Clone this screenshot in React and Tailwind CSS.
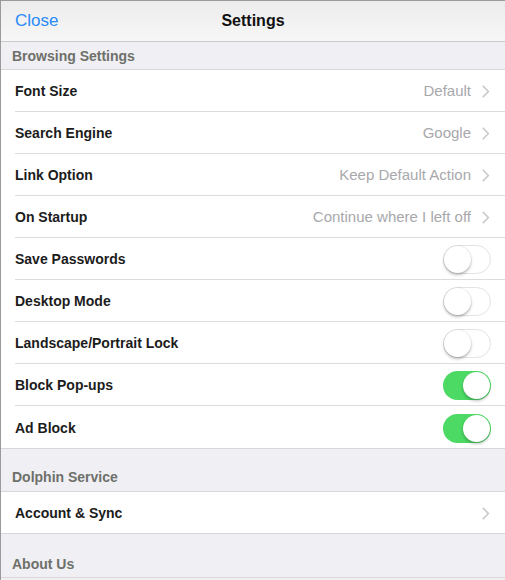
import React from 'react'

const browsing = [
  { label: 'Font Size', value: 'Default' },
  { label: 'Search Engine', value: 'Google' },
  { label: 'Link Option', value: 'Keep Default Action' },
  { label: 'On Startup', value: 'Continue where I left off' },
  { label: 'Save Passwords', toggle: false },
  { label: 'Desktop Mode', toggle: false },
  { label: 'Landscape/Portrait Lock', toggle: false },
  { label: 'Block Pop-ups', toggle: true },
  { label: 'Ad Block', toggle: true, last: true },
]

const Chevron = () => (
  <svg width="8" height="13" viewBox="0 0 8 13" className="ml-[11px]">
    <path d="M1.2 1.2 L6.4 6.5 L1.2 11.8" fill="none" stroke="#c7c7cc" strokeWidth="1.6" strokeLinecap="round" strokeLinejoin="round" />
  </svg>
)

const Toggle = ({ on }) => (
  <div
    className={
      on
        ? 'relative w-[48px] h-[29px] rounded-full bg-[#4cd964] mr-[14px]'
        : 'relative w-[48px] h-[29px] rounded-full bg-white border border-[#e3e3e6] mr-[14px]'
    }
  >
    <div
      className={
        on
          ? 'absolute top-[1px] right-[1px] w-[27px] h-[27px] rounded-full bg-white shadow-[0_2px_3px_rgba(0,0,0,0.25)]'
          : 'absolute top-0 left-0 w-[27px] h-[27px] rounded-full bg-white shadow-[0_2px_3px_rgba(0,0,0,0.25),0_0_0_1px_rgba(0,0,0,0.05)]'
      }
    />
  </div>
)

const Row = ({ item }) => (
  <div className="pl-[14px] bg-white">
    <div
      className={
        item.last
          ? 'h-[42px] flex items-center justify-between pt-[2px]'
          : 'h-[42px] flex items-center justify-between pt-[2px] border-b border-[#dcdce0]'
      }
    >
      <span className="text-[14px] font-semibold text-[#1c1c1c]">{item.label}</span>
      {item.value !== undefined ? (
        <div className="flex items-center pr-[15px]">
          <span className="text-[15px] text-[#a8a8ac]">{item.value}</span>
          <Chevron />
        </div>
      ) : null}
      {item.toggle !== undefined ? <Toggle on={item.toggle} /> : null}
    </div>
  </div>
)

export default function App() {
  return (
    <div
      className="w-[505px] h-[580px] overflow-hidden bg-[#efeff4] border-l border-t border-[#9a9a9a]"
      style={{ fontFamily: "'Liberation Sans', Arial, sans-serif" }}
    >
      <div className="h-[41px] flex items-center justify-center relative bg-gradient-to-b from-[#ececec] to-[#f7f7f7] border-b border-[#c9c9cc]">
        <span className="absolute left-[14px] text-[17px] text-[#2a8af6]">Close</span>
        <span className="text-[16px] font-semibold text-[#111]">Settings</span>
      </div>
      <div className="h-[28px] flex items-center pl-[11px] pt-[1px] border-b border-[#d8d8dc]">
        <span className="text-[14px] font-semibold text-[#6e706a]">Browsing Settings</span>
      </div>
      {browsing.map((item) => (
        <Row key={item.label} item={item} />
      ))}
      <div className="h-[44px] flex items-end pb-[3px] pl-[11px] border-t border-b border-[#d8d8dc]">
        <span className="text-[14px] font-semibold text-[#6e706a]">Dolphin Service</span>
      </div>
      <div className="h-[42px] flex items-center justify-between pl-[14px] pr-[15px] pt-[2px] bg-white border-b border-[#d8d8dc]">
        <span className="text-[14px] font-semibold text-[#1c1c1c]">Account &amp; Sync</span>
        <Chevron />
      </div>
      <div className="h-[44px] flex items-end pb-[2px] pl-[11px] border-b border-[#d8d8dc]">
        <span className="text-[14px] font-semibold text-[#6e706a]">About Us</span>
      </div>
    </div>
  )
}
